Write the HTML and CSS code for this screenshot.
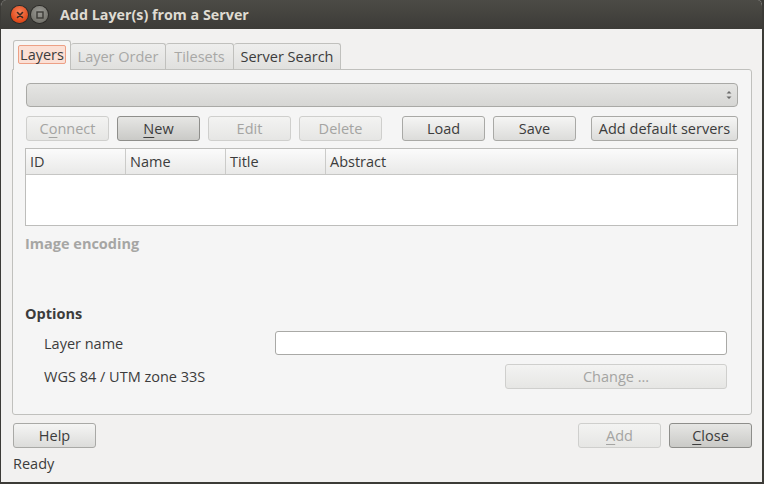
FILE: index.html
```html
<!DOCTYPE html>
<html>
<head>
<meta charset="utf-8">
<link rel="stylesheet" href="styles.css">
</head>
<body>
<div class="window">
  <div class="titlebar">
    <span class="wbtn close"><svg width="14" height="14" viewBox="0 0 14 14"><path d="M4.5 4.5 L9.5 9.5 M9.5 4.5 L4.5 9.5" stroke="#3a2a22" stroke-width="1.6" stroke-linecap="round"/></svg></span>
    <span class="wbtn min"><svg width="14" height="14" viewBox="0 0 14 14"><rect x="4" y="4" width="6" height="6" fill="none" stroke="#3c3b37" stroke-width="1.4"/></svg></span>
    <span class="title">Add Layer(s) from a Server</span>
  </div>
  <div class="content">
    <div class="tabs">
      <div class="tab selected"><span class="focus">Layers</span></div>
      <div class="tab dis t-order">Layer Order</div>
      <div class="tab dis t-tiles">Tilesets</div>
      <div class="tab t-search">Server Search</div>
    </div>
    <div class="pane">
      <div class="combo"><span class="arrows"><svg width="8" height="12" viewBox="0 0 8 12"><path d="M1.5 4.5 L4 2 L6.5 4.5 Z M1.5 7.5 L4 10 L6.5 7.5 Z" fill="#6a6a6a"/></svg></span></div>
      <div class="btnrow">
        <button class="btn dis">C<u>o</u>nnect</button>
        <button class="btn dark"><u>N</u>ew</button>
        <button class="btn dis">Edit</button>
        <button class="btn dis">Delete</button>
        <button class="btn load">Load</button>
        <button class="btn">Save</button>
        <button class="btn wide">Add default servers</button>
      </div>
      <div class="table">
        <div class="thead">
          <div class="th">ID</div>
          <div class="th">Name</div>
          <div class="th">Title</div>
          <div class="th last">Abstract</div>
        </div>
        <div class="tbody"></div>
      </div>
      <div class="section dis-label">Image encoding</div>
      <div class="section options">Options</div>
      <div class="formrow">
        <span class="label">Layer name</span>
        <input class="input" type="text">
      </div>
      <div class="formrow second">
        <span class="label">WGS 84 / UTM zone 33S</span>
        <button class="btn dis change">Change ...</button>
      </div>
    </div>
    <div class="footer">
      <button class="btn">Help</button>
      <span class="grow"></span>
      <button class="btn dis"><u>A</u>dd</button>
      <button class="btn dark"><u>C</u>lose</button>
    </div>
    <div class="status">Ready</div>
  </div>
</div>
</body>
</html>
```
FILE: styles.css
```css
html, body {
  margin: 0;
  padding: 0;
  background: #3c3b37;
}
body {
  width: 764px;
  height: 484px;
  overflow: hidden;
  font-family: "Open Sans", "Noto Sans", sans-serif;
  font-size: 14.5px;
  color: #3c3c3c;
}
.window {
  width: 764px;
  height: 484px;
  box-sizing: border-box;
  border-left: 1px solid #3c3b37;
  border-right: 2px solid #3c3b37;
  border-bottom: 2px solid #3c3b37;
  background: #f2f1f0;
  display: flex;
  flex-direction: column;
  border-radius: 6px 6px 0 0;
  overflow: hidden;
}
.titlebar {
  height: 29px;
  flex: none;
  background: linear-gradient(#4c4b46, #3c3b37);
  display: flex;
  align-items: center;
  padding-left: 11px;
  margin-left: -1px;
}
.wbtn {
  width: 17px;
  height: 17px;
  border-radius: 50%;
  display: flex;
  align-items: center;
  justify-content: center;
  margin-right: 2px;
}
.wbtn.close {
  background: radial-gradient(circle at 50% 35%, #f7835a, #e0491a 70%);
  box-shadow: 0 0 0 1px #2c2b28;
}
.wbtn.min {
  background: radial-gradient(circle at 50% 35%, #9b9a95, #77766f 70%);
  box-shadow: 0 0 0 1px #2c2b28;
  margin-left: 1px;
}
.title {
  margin-left: 10px;
  color: #dfdbd2;
  font-weight: bold;
  font-size: 14.3px;
}
.content {
  flex: 1;
  display: flex;
  flex-direction: column;
  padding: 11px 10px 0 11px;
}
.tabs {
  display: flex;
  align-items: flex-end;
  height: 29px;
  padding-left: 1px;
  position: relative;
  z-index: 1;
}
.tab {
  height: 26px;
  box-sizing: border-box;
  border: 1px solid #c0c0bd;
  border-bottom: none;
  border-left: none;
  border-radius: 3px 3px 0 0;
  background: linear-gradient(#eeeeed, #e0e0de);
  display: flex;
  align-items: center;
  justify-content: center;
  padding-bottom: 1px;
  white-space: nowrap;
}
.t-order { width: 95px; }
.t-tiles { width: 68px; }
.t-search { width: 107px; }
.tab.dis { color: #a8a8a6; }
.tab.selected {
  height: 30px;
  border-left: 1px solid #c0c0bd;
  background: #f6f6f5;
  margin-bottom: -1px;
  align-items: flex-start;
  padding-top: 4px;
  width: 58px;
}
.focus {
  border: 1px solid #eda085;
  background: #fbe0d5;
  border-radius: 2px;
  height: 19px;
  line-height: 18px;
  width: 48px;
  box-sizing: border-box;
  text-align: center;
}
.pane {
  height: 346px;
  box-sizing: border-box;
  border: 1px solid #c0c0bd;
  border-radius: 0 3px 3px 3px;
  background: #f5f5f5;
  padding: 13px 13px 0 12px;
  display: flex;
  flex-direction: column;
}
.combo {
  height: 24px;
  box-sizing: border-box;
  margin-left: 1px;
  border: 1px solid #a9a9a6;
  border-radius: 4px;
  background: linear-gradient(#e5e5e3, #d6d6d4);
  display: flex;
  align-items: center;
  justify-content: flex-end;
  padding-right: 4px;
}
.arrows { display: flex; }
.btnrow {
  display: flex;
  margin-top: 9px;
  margin-left: 1px;
  gap: 8px;
}
.btn {
  font-family: inherit;
  font-size: 14.5px;
  color: #3c3c3c;
  width: 83px;
  height: 25px;
  box-sizing: border-box;
  border: 1px solid #a9a9a6;
  border-radius: 3px;
  background: linear-gradient(#f5f5f4, #dcdcda);
  padding: 0;
  display: flex;
  align-items: center;
  justify-content: center;
  white-space: nowrap;
}
.btn u { text-decoration-thickness: 1px; text-underline-offset: 3px; }
.btn.dis {
  color: #a4a4a2;
  border-color: #cfcfcd;
  background: linear-gradient(#f3f3f2, #e6e6e4);
}
.btn.dark {
  border-color: #8e8e8b;
  background: linear-gradient(#e6e6e4, #cacac7);
}
.btn.load { margin-left: 12px; }
.btn.wide { width: 147px; margin-left: 7px; }
.table {
  margin-top: 7px;
  height: 78px;
  box-sizing: border-box;
  border: 1px solid #bdbdbb;
  background: #fff;
  display: flex;
  flex-direction: column;
}
.thead {
  display: grid;
  grid-template-columns: 100px 100px 100px 1fr;
  height: 25px;
  border-bottom: 1px solid #c6c6c4;
  background: linear-gradient(#fbfbfb, #e9e9e8);
}
.th {
  border-right: 1px solid #cbcbc9;
  padding-left: 4px;
  display: flex;
  align-items: center;
}
.th.last { border-right: none; }
.section {
  font-weight: bold;
  margin-top: 8px;
  height: 20px;
  line-height: 20px;
}
.dis-label { color: #a6a6a4; }
.options { margin-top: 50px; }
.formrow {
  display: flex;
  align-items: center;
  justify-content: space-between;
  margin-top: 7px;
  padding-left: 19px;
  padding-right: 11px;
}
.formrow.second { margin-top: 9px; }
.input {
  width: 452px;
  height: 24px;
  box-sizing: border-box;
  border: 1px solid #a9a9a6;
  border-radius: 3px;
  background: #fff;
  margin: 0;
}
.btn.change { width: 222px; }
.footer {
  display: flex;
  margin-top: 8px;
  padding-left: 1px;
  gap: 8px;
}
.grow { flex: 1; }
.status {
  margin-top: 6px;
  padding-left: 1px;
  height: 20px;
  line-height: 20px;
}
```
